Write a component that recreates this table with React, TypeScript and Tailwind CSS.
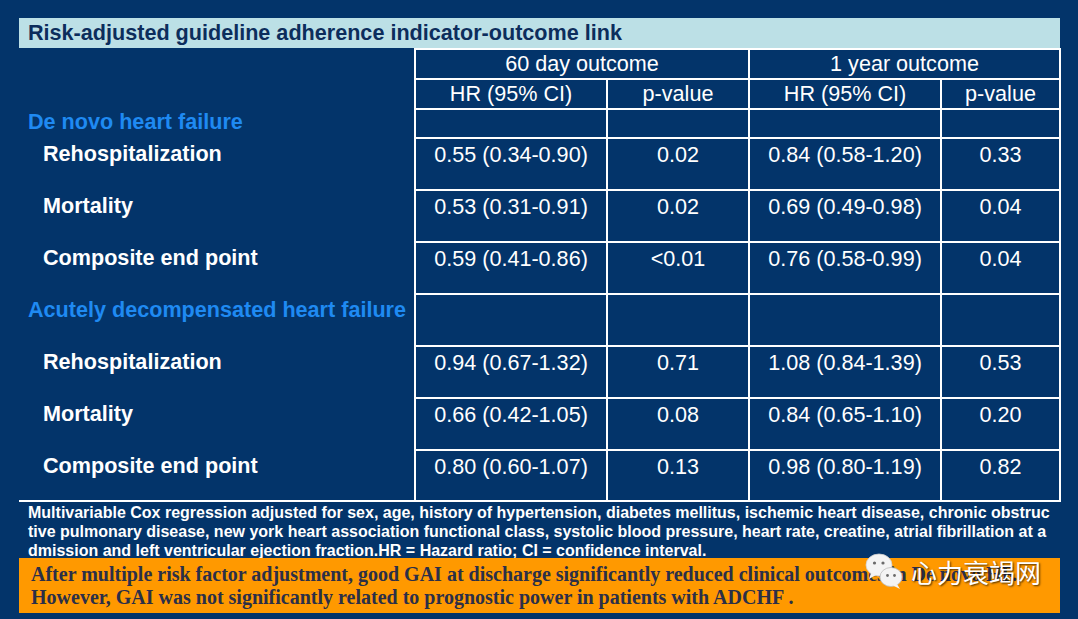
import React from "react";

const rows1 = [
  ["Rehospitalization", "0.55 (0.34-0.90)", "0.02", "0.84 (0.58-1.20)", "0.33"],
  ["Mortality", "0.53 (0.31-0.91)", "0.02", "0.69 (0.49-0.98)", "0.04"],
  ["Composite end point", "0.59 (0.41-0.86)", "<0.01", "0.76 (0.58-0.99)", "0.04"],
];

const rows2 = [
  ["Rehospitalization", "0.94 (0.67-1.32)", "0.71", "1.08 (0.84-1.39)", "0.53"],
  ["Mortality", "0.66 (0.42-1.05)", "0.08", "0.84 (0.65-1.10)", "0.20"],
  ["Composite end point", "0.80 (0.60-1.07)", "0.13", "0.98 (0.80-1.19)", "0.82"],
];

const cell = "border-2 border-white text-center p-0";

function DataRow({ r, last }: { r: string[]; last?: boolean }) {
  return (
    <tr className={last ? "h-[51px]" : "h-[52px]"}>
      <td className={`align-top pt-[4px] pl-[24px] font-bold text-white ${last ? "border-b-2 border-white" : ""}`}>
        {r[0]}
      </td>
      {r.slice(1).map((v, i) => (
        <td key={i} className={`${cell} align-top pt-[4px]`}>
          {v}
        </td>
      ))}
    </tr>
  );
}

function SectionRow({ label, h, pt }: { label: string; h: string; pt: string }) {
  return (
    <tr className={h}>
      <td className={`pl-[9px] font-bold text-[#1f8af2] whitespace-nowrap align-top ${pt}`}>{label}</td>
      <td className={cell}></td>
      <td className={cell}></td>
      <td className={cell}></td>
      <td className={cell}></td>
    </tr>
  );
}

function WeChatMark() {
  return (
    <svg width="40" height="40" viewBox="0 0 40 40">
      <ellipse cx="14" cy="13" rx="13" ry="11" fill="#f4f4f4" stroke="#cfcfcf" strokeWidth="0.8" />
      <path d="M6 21 L4 27 L11 23 Z" fill="#f4f4f4" />
      <circle cx="9.5" cy="11" r="1.6" fill="#6b6b6b" />
      <circle cx="18" cy="11" r="1.6" fill="#6b6b6b" />
      <ellipse cx="26" cy="25" rx="11" ry="9.5" fill="#f4f4f4" stroke="#bdbdbd" strokeWidth="0.8" />
      <path d="M32 32 L35 37 L28 33.5 Z" fill="#f4f4f4" />
      <circle cx="22.5" cy="23.5" r="1.4" fill="#6b6b6b" />
      <circle cx="29.5" cy="23.5" r="1.4" fill="#6b6b6b" />
    </svg>
  );
}

export default function App() {
  return (
    <div
      className="w-[1078px] h-[619px] bg-[#03346a] pt-[18px] pl-[19px] overflow-hidden"
      style={{ fontFamily: '"Liberation Sans", Arial, sans-serif' }}
    >
      <div className="w-[1041px] h-[30px] bg-[#bce0e6] pl-[9px] flex items-center text-[21.6px] font-bold text-[#0c2d5c] whitespace-nowrap">
        Risk-adjusted guideline adherence indicator-outcome link
      </div>

      <table className="table-fixed border-collapse w-[1041px] text-[21.6px] leading-[24px] text-white">
        <colgroup>
          <col className="w-[396px]" />
          <col className="w-[192px]" />
          <col className="w-[142px]" />
          <col className="w-[192px]" />
          <col className="w-[119px]" />
        </colgroup>
        <tbody>
          <tr className="h-[30px]">
            <td className="p-0"></td>
            <td colSpan={2} className={cell}>60 day outcome</td>
            <td colSpan={2} className={cell}>1 year outcome</td>
          </tr>
          <tr className="h-[30px]">
            <td className="p-0"></td>
            <td className={cell}>HR (95% CI)</td>
            <td className={cell}>p-value</td>
            <td className={cell}>HR (95% CI)</td>
            <td className={cell}>p-value</td>
          </tr>
          <SectionRow label="De novo heart failure" h="h-[29px]" pt="pt-[1px]" />
          {rows1.map((r) => (
            <DataRow key={r[0]} r={r} />
          ))}
          <SectionRow label="Acutely decompensated heart failure" h="h-[52px]" pt="pt-[4px]" />
          {rows2.map((r, i) => (
            <DataRow key={r[0] + i} r={r} last={i === rows2.length - 1} />
          ))}
        </tbody>
      </table>

      <div className="w-[1041px] h-[56px] pl-[9px] pt-[1px] text-[16px] leading-[19px] font-bold text-white whitespace-nowrap">
        <div>Multivariable Cox regression adjusted for sex, age, history of hypertension, diabetes mellitus, ischemic heart disease, chronic obstruc</div>
        <div>tive pulmonary disease, new york heart association functional class, systolic blood pressure, heart rate, creatine, atrial fibrillation at a</div>
        <div>dmission and left ventricular ejection fraction.HR = Hazard ratio; CI = confidence interval.</div>
      </div>

      <div className="relative w-[1041px] h-[55px] bg-[#ff9900] pl-[12px] pt-[5px]">
        <div
          className="text-[20px] leading-[23px] font-bold text-[#2b2f48] whitespace-nowrap"
          style={{ fontFamily: '"Liberation Serif", "Times New Roman", serif' }}
        >
          <div>After multiple risk factor adjustment, good GAI at discharge significantly reduced clinical outcomes in De novo HF.</div>
          <div>However, GAI was not significantly related to prognostic power in patients with ADCHF .</div>
        </div>
        <div className="absolute left-[846px] top-[-6px] flex items-center gap-[6px]">
          <WeChatMark />
          <span
            className="text-[26px] leading-[30px] text-white [text-shadow:1px_1px_2px_rgba(0,0,0,0.7)]"
            style={{ fontFamily: '"Noto Sans CJK SC", sans-serif' }}
          >
            心力衰竭网
          </span>
        </div>
      </div>
    </div>
  );
}
